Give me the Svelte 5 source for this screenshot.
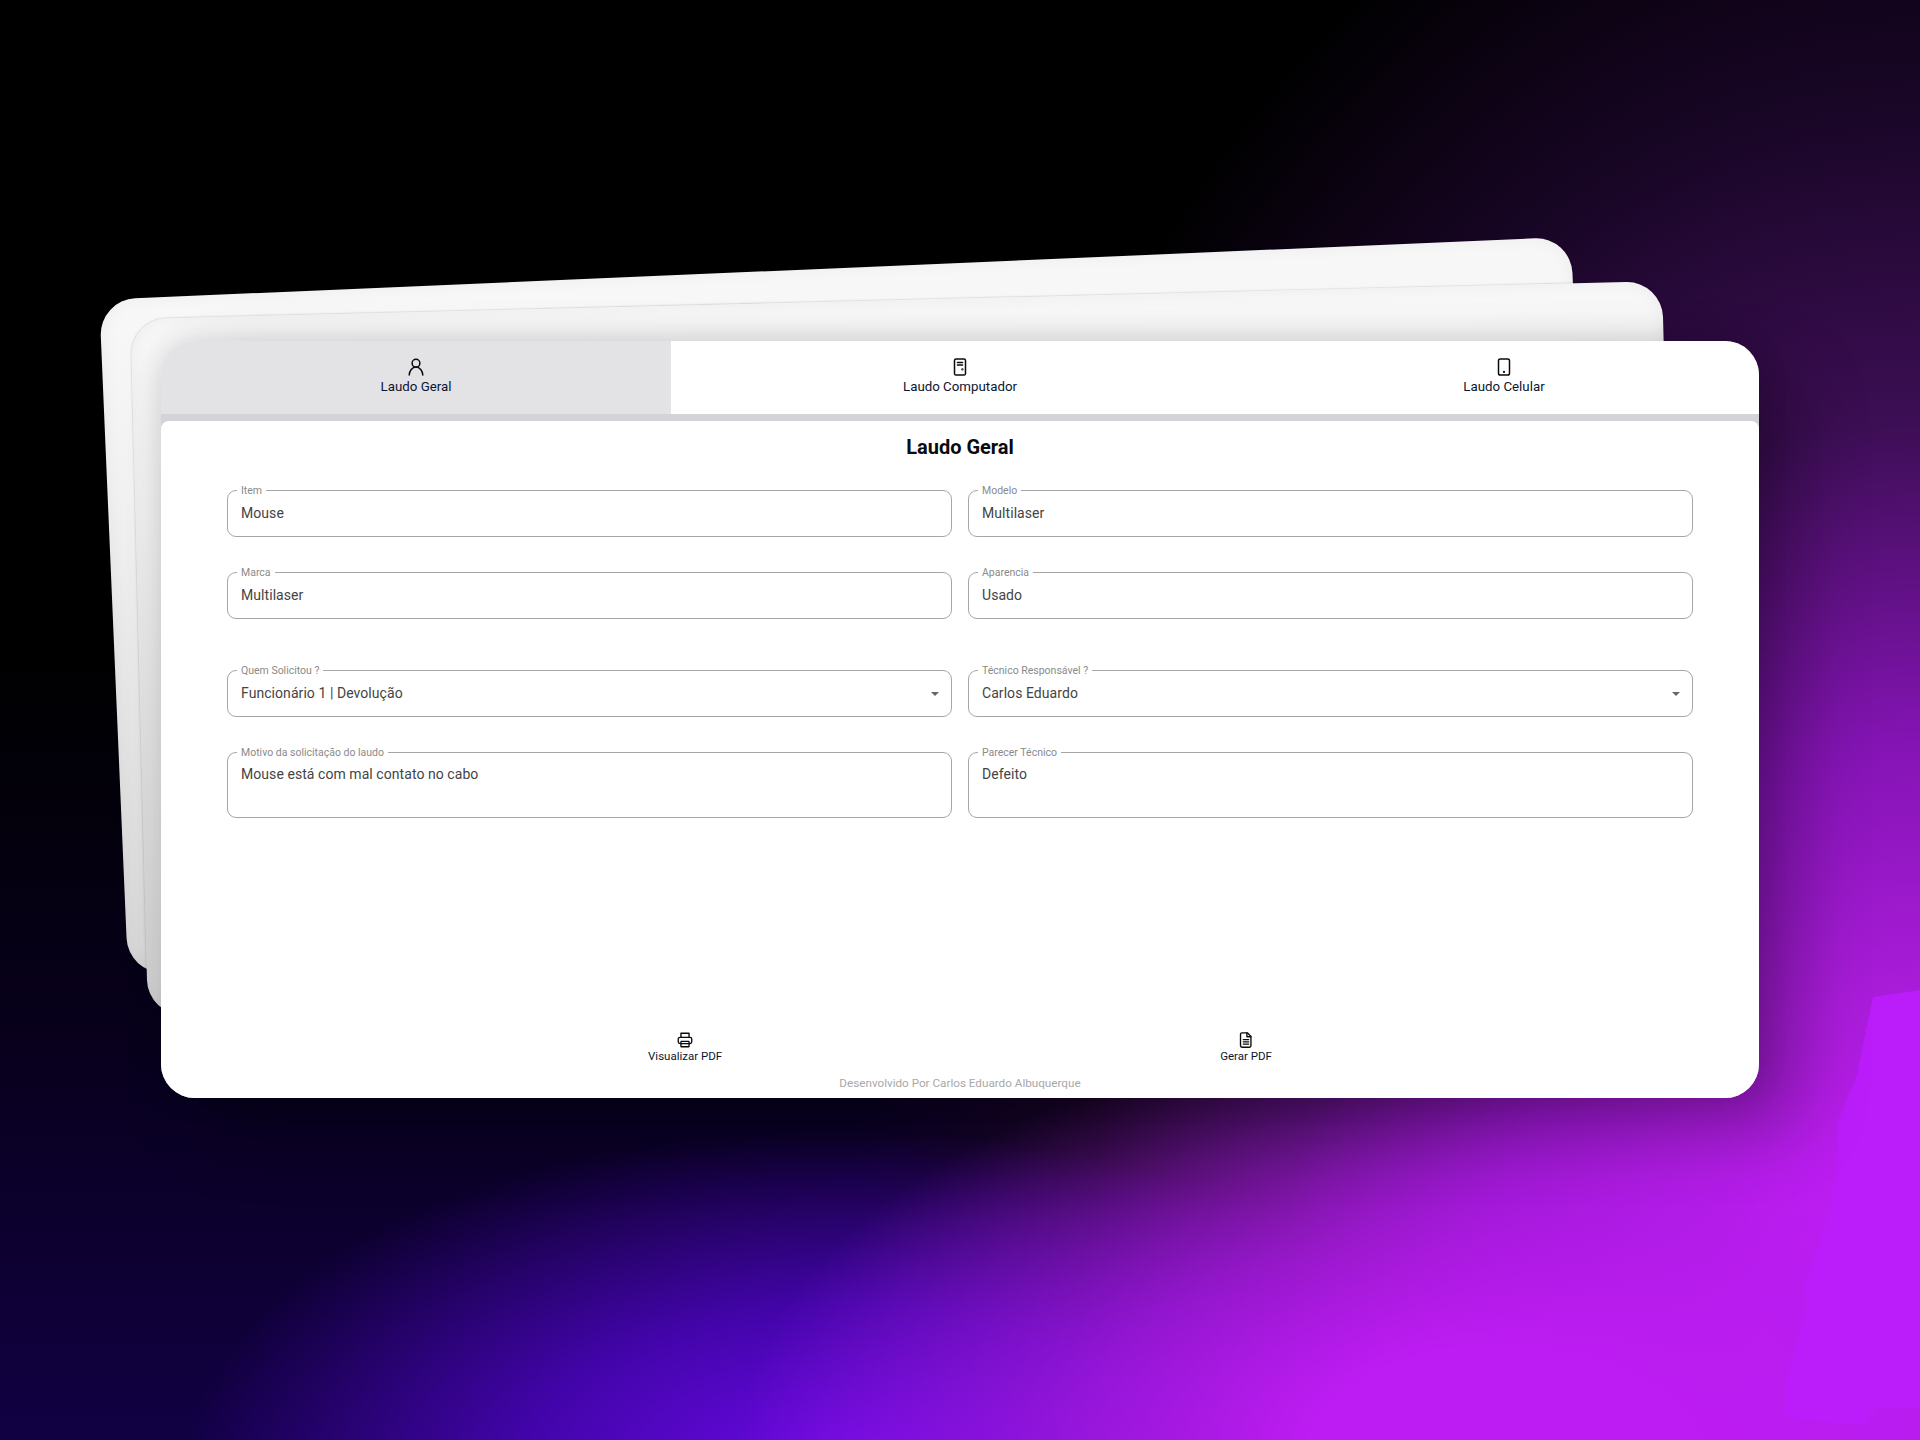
<script>
  const tabs = [
    { label: "Laudo Geral", icon: "user", active: true },
    { label: "Laudo Computador", icon: "pc" },
    { label: "Laudo Celular", icon: "phone" }
  ];
  const rows = [
    { cls: "", fields: [{ label: "Item", value: "Mouse" }, { label: "Modelo", value: "Multilaser" }] },
    { cls: "", fields: [{ label: "Marca", value: "Multilaser" }, { label: "Aparencia", value: "Usado" }] },
    { cls: "gap-top", fields: [
      { label: "Quem Solicitou ?", value: "Funcionário 1 | Devolução", select: true },
      { label: "Técnico Responsável ?", value: "Carlos Eduardo", select: true }
    ] },
    { cls: "tall", fields: [
      { label: "Motivo da solicitação do laudo", value: "Mouse está com mal contato no cabo" },
      { label: "Parecer Técnico", value: "Defeito" }
    ] }
  ];
</script>

{#snippet icon(name)}
  <svg class="icon" viewBox="0 0 20 20" fill="none" stroke="currentColor" stroke-width="1.5" stroke-linecap="round" stroke-linejoin="round" aria-hidden="true">
    {#if name === "user"}
      <circle cx="10" cy="6.2" r="3.9" />
      <path d="M3.2 18c.2-4 3-7.9 6.8-7.9s6.6 3.9 6.8 7.9" />
    {:else if name === "pc"}
      <rect x="4.5" y="2" width="11" height="16" rx="1.6" />
      <path d="M7.5 5.5h5M7.5 8h5" />
      <circle cx="12.4" cy="12.4" r=".4" />
    {:else if name === "phone"}
      <rect x="4.5" y="2" width="11" height="16" rx="1.8" />
      <circle cx="10" cy="15" r=".4" />
    {:else if name === "printer"}
      <path d="M5.5 7V2.5h9V7" />
      <rect x="2.5" y="7" width="15" height="7" rx="2" />
      <rect x="5.5" y="11.5" width="9" height="6" rx=".6" />
    {:else}
      <path d="M5.5 2h6l4 4v10.4a1.6 1.6 0 0 1-1.6 1.6H5.5a1.6 1.6 0 0 1-1.6-1.6V3.6A1.6 1.6 0 0 1 5.5 2z" />
      <path d="M11 2.2v4.2h4.3M7 9.5h6M7 12h6M7 14.5h6" />
    {/if}
  </svg>
{/snippet}

<div class="stage">
  <svg class="blot" viewBox="0 0 220 480" aria-hidden="true">
    <path d="M173 37 L220 30 V448 H176 L165 464 L133 463 L85 457 L85 425 L97 380 L107 340 L103 330 L127 260 L137 213 L138 160 L157 115 L167 65 Z" />
  </svg>

  <div class="sheet sheet-back"></div>
  <div class="sheet sheet-mid"></div>

  <main class="card">
    <nav class="tabs">
      {#each tabs as tab}
        <div class="tab" class:active={tab.active}>
          {@render icon(tab.icon)}
          <span>{tab.label}</span>
        </div>
      {/each}
    </nav>

    <section class="panel">
      <h1>Laudo Geral</h1>

      <div class="form">
        {#each rows as row}
          <div class="row {row.cls}">
            {#each row.fields as field}
              <div class="field" class:select={field.select}>
                <span class="legend">{field.label}</span>
                <span class="value">{field.value}</span>
                {#if field.select}<i class="arrow"></i>{/if}
              </div>
            {/each}
          </div>
        {/each}
      </div>

      <div class="actions">
        <div class="action">
          {@render icon("printer")}
          <span>Visualizar PDF</span>
        </div>
        <div class="action">
          {@render icon("file")}
          <span>Gerar PDF</span>
        </div>
      </div>
      <footer>Desenvolvido Por Carlos Eduardo Albuquerque</footer>
    </section>
  </main>
</div>

<style>
  :global(body) {
    margin: 0;
    background: #000;
  }

  .stage {
    position: relative;
    width: 1920px;
    height: 1440px;
    overflow: hidden;
    padding-top: 341px;
    box-sizing: border-box;
    font-family: Roboto, "Liberation Sans", sans-serif;
    background:
      radial-gradient(ellipse 760px 430px at 78% 101%, #bd1cf2 25%, rgba(182, 28, 238, 0.7) 55%, rgba(160, 24, 225, 0) 100%),
      radial-gradient(ellipse 660px 340px at 44% 102%, #6408da 10%, rgba(86, 6, 212, 0.72) 48%, rgba(60, 0, 170, 0) 100%),
      radial-gradient(ellipse 1080px 1700px at 100% 100%, #c01df4 16%, #a81cd8 27%, #8414b4 41%, #3c0e54 60%, #1a0628 78%, rgba(26, 6, 40, 0) 100%),
      linear-gradient(180deg, #000 45%, #08001c 72%, #120044 100%);
  }

  .blot {
    position: absolute;
    right: 0;
    bottom: 0;
    width: 220px;
    height: 480px;
  }

  .blot path {
    fill: #bb1dfa;
  }

  .sheet {
    position: absolute;
    background: linear-gradient(180deg, #f8f8f8, #f1f1f1 30%, #e4e4e4 65%, #d8d8d8);
    border-radius: 36px;
    box-shadow: inset 0 0 18px rgba(0, 0, 0, 0.05), 0 0 2px rgba(0, 0, 0, 0.3);
  }

  .sheet-back {
    left: 113px;
    top: 268px;
    width: 1473px;
    height: 675px;
    transform: rotate(-2.45deg);
  }

  .sheet-mid {
    left: 139px;
    top: 300px;
    width: 1532px;
    height: 697px;
    transform: rotate(-1.42deg);
  }

  .card {
    position: relative;
    width: 1598px;
    height: 757px;
    margin: 0 auto;
    display: flex;
    flex-direction: column;
    background: #d4d4d8;
    border-radius: 34px;
    overflow: hidden;
    box-shadow: 0 0 30px rgba(0, 0, 0, 0.14), 40px 34px 70px rgba(0, 0, 0, 0.28);
  }

  .tabs {
    display: grid;
    grid-template-columns: 510px 1fr 510px;
    height: 73px;
    flex: none;
    background: #fff;
  }

  .tab {
    display: flex;
    flex-direction: column;
    align-items: center;
    padding-top: 16px;
    box-sizing: border-box;
    font-size: 13.3px;
    line-height: 20px;
    color: #0b1630;
  }

  .tab .icon {
    width: 20px;
    height: 20px;
    color: #0a0a0a;
  }

  .tab.active {
    background: #e3e3e6;
  }

  .panel {
    flex: 1;
    margin-top: 7px;
    display: flex;
    flex-direction: column;
    background: #fff;
    border-radius: 8px 8px 0 0;
    padding: 14px 66px 0 66px;
  }

  h1 {
    margin: 0;
    font-size: 20px;
    line-height: 24px;
    font-weight: 700;
    text-align: center;
    color: #0a0a0f;
  }

  .form {
    margin-top: 31px;
    display: flex;
    flex-direction: column;
    gap: 35px;
  }

  .row {
    display: grid;
    grid-template-columns: 725px 725px;
    gap: 16px;
  }

  .row.gap-top {
    margin-top: 16px;
  }

  .field {
    position: relative;
    height: 47px;
    box-sizing: border-box;
    border: 1px solid #a6a6a6;
    border-radius: 9px;
    padding: 12px 13px;
    font-size: 14px;
    line-height: 20px;
    letter-spacing: 0.06px;
    color: #444;
  }

  .tall .field {
    height: 66px;
    padding-top: 11px;
  }

  .legend {
    position: absolute;
    left: 9px;
    top: -6px;
    padding: 0 4px;
    background: #fff;
    font-size: 10.5px;
    line-height: 11px;
    letter-spacing: 0;
    color: #8a8a8a;
  }

  .arrow {
    position: absolute;
    right: 12px;
    top: 21px;
    border: 4px solid transparent;
    border-top: 4px solid #666;
    border-bottom: 0;
  }

  .actions {
    margin-top: auto;
    display: flex;
    justify-content: center;
    gap: 498px;
  }

  .action {
    display: flex;
    flex-direction: column;
    align-items: center;
    font-size: 11.5px;
    line-height: 14px;
    color: #0b1630;
  }

  .action .icon {
    width: 18px;
    height: 18px;
    color: #0a0a0a;
  }

  footer {
    margin: 13px 0 8px;
    text-align: center;
    font-size: 11.7px;
    line-height: 14px;
    color: #a8a8a8;
  }
</style>
